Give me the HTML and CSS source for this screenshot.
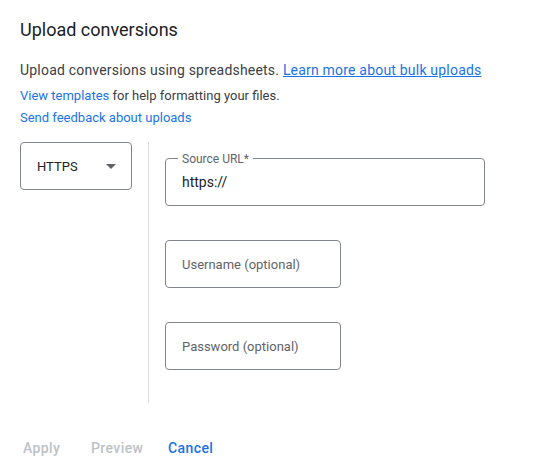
FILE: index.html
```html
<!DOCTYPE html>
<html lang="en">
<head>
    <meta charset="UTF-8">
    <meta name="viewport" content="width=device-width, initial-scale=1.0">
    <title>Upload conversions</title>
    <link rel="stylesheet" href="styles.css">
</head>
<body>
    <div class="dialog">
        <h1 class="title">Upload conversions</h1>
        <p class="intro">Upload conversions using spreadsheets. <a href="#" class="link underline">Learn more about bulk uploads</a></p>
        <p class="note"><a href="#" class="link">View templates</a> for help formatting your files.</p>
        <p class="note feedback"><a href="#" class="link">Send feedback about uploads</a></p>

        <div class="source">
            <div class="left">
                <div class="select">
                    <span>HTTPS</span>
                    <span class="arrow"></span>
                </div>
            </div>
            <div class="divider"></div>
            <div class="fields">
                <div class="field wide">
                    <span class="label">Source URL*</span>
                    <span class="value">https://</span>
                </div>
                <div class="field">
                    <span class="placeholder">Username (optional)</span>
                </div>
                <div class="field">
                    <span class="placeholder">Password (optional)</span>
                </div>
            </div>
        </div>

        <div class="actions">
            <span class="btn disabled apply">Apply</span>
            <span class="btn disabled preview">Preview</span>
            <span class="btn primary">Cancel</span>
        </div>
    </div>
</body>
</html>
```

FILE: styles.css
```css
body
{
    margin: 0;
    background: #fff;
    color: #202124;
    font-family: Roboto, "Liberation Sans", sans-serif;
}
.dialog
{
    padding: 18px 20px 0 20px;
}
.title
{
    margin: 0;
    font-size: 18px;
    line-height: 24px;
    font-weight: 400;
}
.intro
{
    margin: 18px 0 0 0;
    font-size: 14px;
    line-height: 20px;
    letter-spacing: 0.2px;
    color: #3c4043;
}
.note
{
    margin: 7px 0 0 0;
    font-size: 13px;
    line-height: 18px;
    color: #3c4043;
}
.feedback
{
    margin-top: 4px;
}
.link
{
    color: #1a73e8;
    text-decoration: none;
}
.underline
{
    text-decoration: underline;
}
.source
{
    display: flex;
    margin-top: 15px;
}
.left
{
    width: 128px;
}
.select
{
    width: 112px;
    height: 48px;
    box-sizing: border-box;
    border: 1px solid #80868b;
    border-radius: 4px;
    display: flex;
    align-items: center;
    justify-content: space-between;
    padding: 0 15px 0 16px;
    font-size: 13px;
    color: #202124;
}
.arrow
{
    width: 0;
    height: 0;
    border-left: 5px solid transparent;
    border-right: 5px solid transparent;
    border-top: 5px solid #5f6368;
}
.divider
{
    width: 1px;
    height: 261px;
    background: #dadce0;
}
.fields
{
    display: flex;
    flex-direction: column;
    gap: 34px;
    padding: 16px 0 0 16px;
}
.field
{
    position: relative;
    width: 176px;
    height: 48px;
    box-sizing: border-box;
    border: 1px solid #80868b;
    border-radius: 4px;
    display: flex;
    align-items: center;
    padding: 0 16px;
    font-size: 13px;
}
.field.wide
{
    width: 320px;
    font-size: 14px;
}
.label
{
    position: absolute;
    left: 12px;
    top: -7px;
    padding: 0 4px;
    background: #fff;
    font-size: 12px;
    line-height: 14px;
    color: #5f6368;
}
.value
{
    color: #202124;
}
.placeholder
{
    color: #5f6368;
}
.actions
{
    display: flex;
    margin-top: 35px;
}
.btn
{
    font-size: 14px;
    font-weight: 500;
    line-height: 20px;
    letter-spacing: 0.4px;
    padding: 0 3px;
}
.disabled
{
    color: #bdc1c6;
}
.primary
{
    color: #1a73e8;
}
.apply
{
    width: 62px;
}
.preview
{
    width: 71px;
}
```
